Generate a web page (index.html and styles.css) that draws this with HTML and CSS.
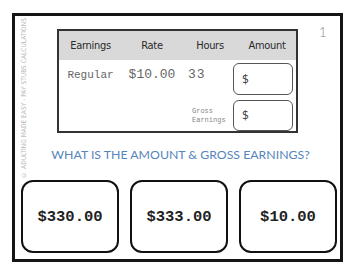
FILE: index.html
```html
<!DOCTYPE html>
<html>
<head>
<meta charset="utf-8">
<link rel="stylesheet" href="styles.css">
</head>
<body>
<div class="frame">
  <div class="side">© Adulting Made Easy - Pay Stubs Calculations</div>
  <div class="card">
    <div class="head">
      <span>Earnings</span><span>Rate</span><span>Hours</span><span>Amount</span>
    </div>
    <div class="body">
      <span class="c1">Regular</span>
      <span class="c2">$10.00</span>
      <span class="c3">33</span>
      <div class="box">$</div>
      <span class="gross">Gross<br>Earnings</span>
      <div class="box box2">$</div>
    </div>
  </div>
  <div class="num">1</div>
  <div class="question">WHAT IS THE AMOUNT &amp; GROSS EARNINGS?</div>
  <div class="answers">
    <div class="ans">$330.00</div>
    <div class="ans">$333.00</div>
    <div class="ans">$10.00</div>
  </div>
</div>
</body>
</html>
```
FILE: styles.css
```css
html, body { margin: 0; padding: 0; background: #fff; }
body { width: 350px; height: 271px; overflow: hidden; }

.frame {
  box-sizing: border-box;
  margin: 13px 0 0 12px;
  width: 331px;
  height: 249px;
  border: 3px solid #151515;
  display: grid;
  grid-template-columns: 42px 241px 1fr;
  grid-template-rows: 117px 47px 73px;
  padding-bottom: 6px;
}

.side {
  grid-column: 1;
  grid-row: 1 / 3;
  align-self: center;
  justify-self: start;
  margin-left: 5px;
  writing-mode: vertical-rl;
  transform: rotate(180deg);
  font-family: "DejaVu Sans Condensed", "DejaVu Sans", sans-serif;
  font-size: 6.6px;
  text-transform: uppercase;
  color: #b8b8b8;
  white-space: nowrap;
  line-height: 8px;
}

.card {
  grid-column: 2;
  grid-row: 1;
  margin-top: 13px;
  box-sizing: border-box;
  height: 104px;
  border: 2px solid #333;
  display: flex;
  flex-direction: column;
}

.head {
  display: grid;
  grid-template-columns: 63px 60px 56px 1fr;
  height: 29px;
  background: #d9d9d9;
  align-items: center;
  text-align: center;
  font-family: "Liberation Sans Narrow", "DejaVu Sans Condensed", sans-serif;
  font-size: 11px;
  color: #2a2a2a;
  letter-spacing: -0.3px;
}

.body {
  display: grid;
  grid-template-columns: 63px 60px 51px 60px;
  grid-template-rows: 32px 31px;
  row-gap: 5px;
  padding-top: 3px;
  font-family: "Liberation Mono", monospace;
  color: #666;
}

.c1, .c2, .c3 { align-self: start; padding-top: 4px; }
.c1 { font-size: 11px; text-align: center; padding-top: 6px; }
.c2 { font-size: 13px; text-align: center; }
.c3 { font-size: 13px; padding-left: 6px; letter-spacing: 1px; }

.gross {
  grid-column: 3;
  grid-row: 2;
  font-size: 7px;
  line-height: 9px;
  color: #888;
  padding-left: 10px;
  align-self: center;
}

.box {
  grid-column: 4;
  grid-row: 1;
  box-sizing: border-box;
  border: 1.5px solid #555;
  border-radius: 6px;
  font-family: "Open Sans", sans-serif;
  font-size: 12px;
  color: #444;
  display: flex;
  align-items: center;
  padding-left: 8px;
}
.box2 { grid-row: 2; }

.num {
  grid-column: 3;
  grid-row: 1;
  padding-top: 8px;
  padding-left: 21px;
  font-family: "Lato", sans-serif;
  font-weight: 300;
  font-size: 13px;
  color: #888;
}

.question {
  grid-column: 1 / -1;
  grid-row: 2;
  padding-top: 14px;
  line-height: 15px;
  text-align: center;
  padding-left: 6px;
  font-family: "Lato", sans-serif;
  font-size: 12.3px;
  color: #5585bb;
  white-space: nowrap;
}

.answers {
  grid-column: 1 / -1;
  grid-row: 3;
  display: flex;
  gap: 11px;
  padding: 0 3px 0 6px;
}

.ans {
  flex: 1;
  box-sizing: border-box;
  border: 2px solid #111;
  border-radius: 12px;
  display: flex;
  align-items: center;
  justify-content: center;
  font-family: "Liberation Mono", monospace;
  font-weight: bold;
  font-size: 15.5px;
  color: #222;
}
```
